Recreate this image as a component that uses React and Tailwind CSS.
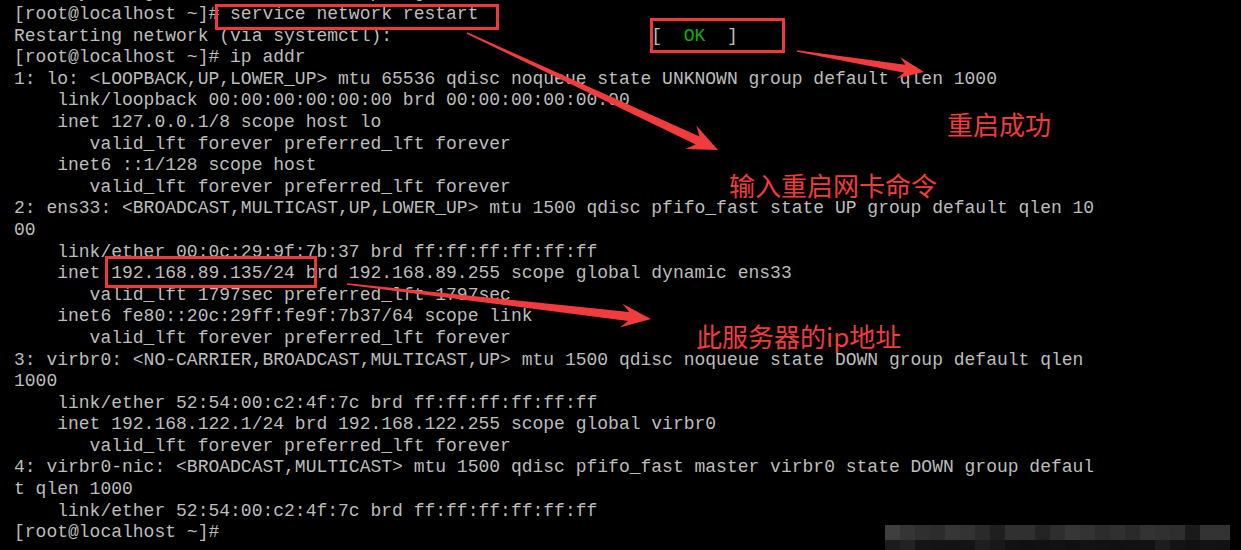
import React from 'react';

const lines = [
  '      y     g                    p   g',
  '[root@localhost ~]# service network restart',
  'Restarting network (via systemctl):                        [  OK  ]',
  '[root@localhost ~]# ip addr',
  '1: lo: <LOOPBACK,UP,LOWER_UP> mtu 65536 qdisc noqueue state UNKNOWN group default qlen 1000',
  '    link/loopback 00:00:00:00:00:00 brd 00:00:00:00:00:00',
  '    inet 127.0.0.1/8 scope host lo',
  '       valid_lft forever preferred_lft forever',
  '    inet6 ::1/128 scope host',
  '       valid_lft forever preferred_lft forever',
  '2: ens33: <BROADCAST,MULTICAST,UP,LOWER_UP> mtu 1500 qdisc pfifo_fast state UP group default qlen 10',
  '00',
  '    link/ether 00:0c:29:9f:7b:37 brd ff:ff:ff:ff:ff:ff',
  '    inet 192.168.89.135/24 brd 192.168.89.255 scope global dynamic ens33',
  '       valid_lft 1797sec preferred_lft 1797sec',
  '    inet6 fe80::20c:29ff:fe9f:7b37/64 scope link',
  '       valid_lft forever preferred_lft forever',
  '3: virbr0: <NO-CARRIER,BROADCAST,MULTICAST,UP> mtu 1500 qdisc noqueue state DOWN group default qlen',
  '1000',
  '    link/ether 52:54:00:c2:4f:7c brd ff:ff:ff:ff:ff:ff',
  '    inet 192.168.122.1/24 brd 192.168.122.255 scope global virbr0',
  '       valid_lft forever preferred_lft forever',
  '4: virbr0-nic: <BROADCAST,MULTICAST> mtu 1500 qdisc pfifo_fast master virbr0 state DOWN group defaul',
  't qlen 1000',
  '    link/ether 52:54:00:c2:4f:7c brd ff:ff:ff:ff:ff:ff',
  '[root@localhost ~]#',
];

// tapered "snipping tool" arrow, tail -> tip
function arrowPoints([x1, y1], [x2, y2], h = 28, w = 12, s = 4, t = 0.8) {
  const dx = x2 - x1, dy = y2 - y1;
  const len = Math.hypot(dx, dy);
  const ux = dx / len, uy = dy / len;
  const nx = -uy, ny = ux;
  const p = (bx, by, along, side) => `${bx + ux * along + nx * side},${by + uy * along + ny * side}`;
  return [
    p(x1, y1, 0, t),
    p(x2, y2, -h * 0.75, s),
    p(x2, y2, -h, w),
    `${x2},${y2}`,
    p(x2, y2, -h, -w),
    p(x2, y2, -h * 0.75, -s),
    p(x1, y1, 0, -t),
  ].join(' ');
}

const topBlocks = [
  'bg-[#3f3f3f]', 'bg-[#353535]', 'bg-[#2f2f2f]', 'bg-[#2c2c2c]', 'bg-[#363636]', 'bg-[#333333]',
  'bg-[#2a2a2a]', 'bg-[#1f1f1f]', 'bg-[#303030]', 'bg-[#303030]', 'bg-[#242424]', 'bg-[#2e2e2e]',
  'bg-[#363636]', 'bg-[#333333]', 'bg-[#2c2c2c]', 'bg-[#303030]', 'bg-[#2a2a2a]', 'bg-[#333333]',
  'bg-[#303030]', 'bg-[#2e2e2e]', 'bg-[#1a1a1a]', 'bg-[#333333]', 'bg-[#333333]',
];
const bottomBlocks = [
  'bg-[#1c1c1c]', 'bg-[#222222]', 'bg-[#151515]', 'bg-[#141414]', 'bg-[#131313]', 'bg-[#141414]',
  'bg-[#1e1e1e]', 'bg-[#181818]', 'bg-[#121212]', 'bg-[#101010]', 'bg-[#111111]', 'bg-[#121212]',
  'bg-[#101010]', 'bg-[#131313]', 'bg-[#121212]', 'bg-[#111111]', 'bg-[#121212]', 'bg-[#121212]',
  'bg-[#1d1d1d]', 'bg-[#141414]', 'bg-[#111111]', 'bg-[#131313]', 'bg-[#121212]',
];

function Line({ text }) {
  if (text.includes('[  OK  ]')) {
    const [before] = text.split('[  OK  ]');
    return (
      <div className="h-[21.6px] leading-[21.6px] whitespace-pre">
        {before}[  <span className="text-[#0cb20c]">OK</span>  ]
      </div>
    );
  }
  return <div className="h-[21.6px] leading-[21.6px] whitespace-pre">{text}</div>;
}

export default function App() {
  return (
    <div className="relative w-[1241px] h-[550px] overflow-hidden bg-black">
      <div className="pl-[14px] -mt-[17.6px] text-[18px] text-[#bdbdbd] font-['Liberation_Mono','DejaVu_Sans_Mono',monospace]">
        {lines.map((l, i) => <Line key={i} text={l} />)}
      </div>

      {/* red annotation boxes */}
      <div className="absolute left-[215px] top-[4px] w-[284px] h-[26px] border-[3px] border-[#ec3a3c]" />
      <div className="absolute left-[650px] top-[18px] w-[135px] h-[35px] border-[3px] border-[#ec3a3c]" />
      <div className="absolute left-[105px] top-[256px] w-[212px] h-[32px] border-[3px] border-[#ec3a3c]" />

      {/* arrows */}
      <svg className="absolute inset-0" width="1241" height="550" viewBox="0 0 1241 550">
        <polygon points={arrowPoints([467, 33], [718, 150], 30, 13, 4.5, 0.8)} fill="#f03c3c" />
        <polygon points={arrowPoints([797, 51], [924, 72], 26, 11, 4, 0.8)} fill="#f03c3c" />
        <polygon points={arrowPoints([347, 284], [651, 319], 30, 12, 4.5, 0.8)} fill="#f03c3c" />
      </svg>

      {/* labels */}
      <div className="absolute left-[947px] top-[111px] text-[26px] leading-none text-[#f23c3c] font-['Noto_Sans_CJK_SC',sans-serif]">重启成功</div>
      <div className="absolute left-[729px] top-[172px] text-[26px] leading-none text-[#f23c3c] font-['Noto_Sans_CJK_SC',sans-serif]">输入重启网卡命令</div>
      <div className="absolute left-[696px] top-[323px] text-[26px] leading-none text-[#f23c3c] font-['Noto_Sans_CJK_SC',sans-serif]">此服务器的ip地址</div>

      {/* pixelated watermark */}
      <div className="absolute left-[885px] top-[525px] flex flex-col">
        <div className="flex">
          {topBlocks.map((c, i) => <div key={i} className={`w-[15px] h-[15px] ${c}`} />)}
        </div>
        <div className="flex">
          {bottomBlocks.map((c, i) => <div key={i} className={`w-[15px] h-[10px] ${c}`} />)}
        </div>
      </div>
    </div>
  );
}
